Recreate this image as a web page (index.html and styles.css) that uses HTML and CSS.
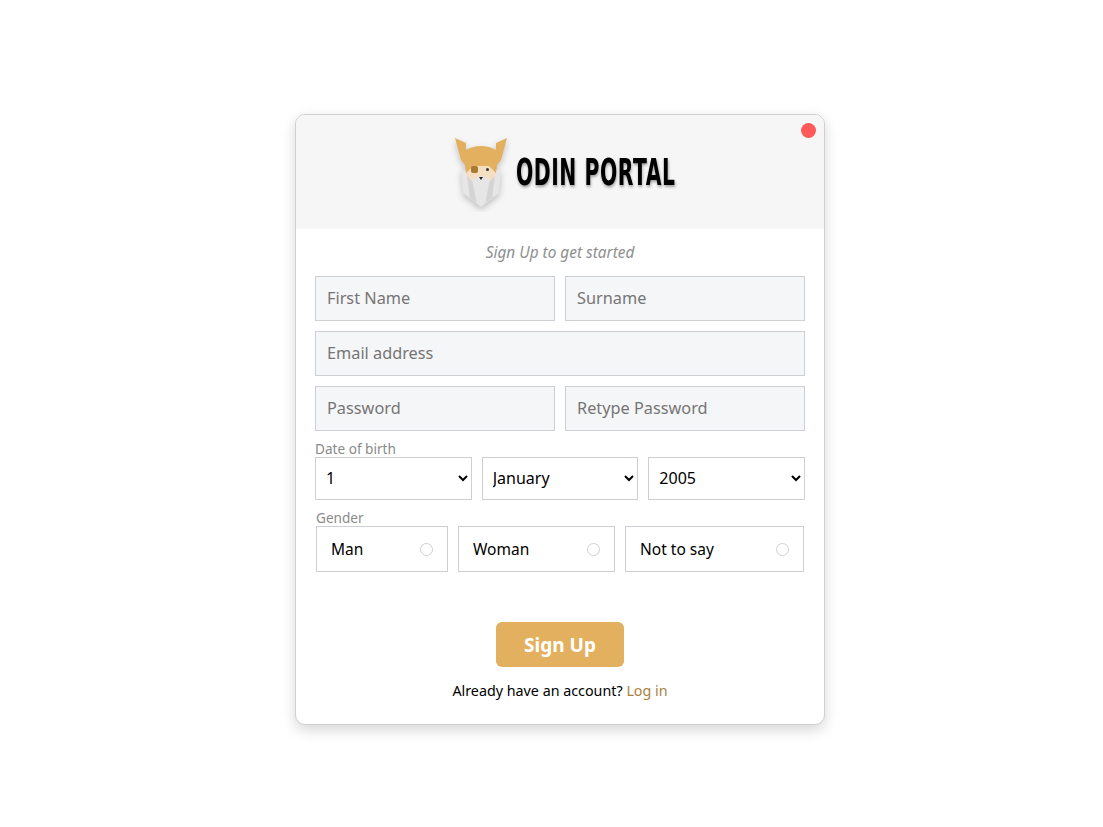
FILE: index.html
```html
<!DOCTYPE html>
<html lang="en">
  <head>
    <meta charset="UTF-8" />
    <meta name="viewport" content="width=device-width, initial-scale=1.0" />
    <title>Odin Portal - Sign Up</title>
    <link rel="stylesheet" href="styles.css">
  </head>
  <body>
    <div class="card">
      <span class="close-dot"></span>
      <header class="card-header">
        <svg class="logo" viewBox="450 132 60 80" width="60" height="80">
          <g class="logo-art">
            <polygon fill="#e6e6e6" points="460,170 500,170 498,193 480,207 462,193" />
            <polygon fill="#d4d4d4" points="466,176 472,180 476,203 469,198" />
            <polygon fill="#d4d4d4" points="494,176 488,180 484,203 491,198" />
            <polygon fill="#f5dfc3" points="465,164 495,164 495,175 488,182 472,182 465,175" />
            <polygon fill="#e6e6e6" points="471,179 480,176 489,179 484,204 476,204" />
            <path fill="#e2b05e" d="M454 138 L465 143 L465 150 Q472 146 480 146 Q488 146 495 150 L495 143 L506 138 L500 160 L496 165 L495 173 L488 166 L472 166 L465 173 L464 165 L460 160 Z" />
            <rect fill="#a97a2f" x="470" y="166" width="7" height="7" rx="2" />
            <circle fill="#333" cx="486.5" cy="169.5" r="1.5" />
            <polygon fill="#222" points="478,177 482,177 480,180" />
          </g>
        </svg>
        <span class="brand">ODIN PORTAL</span>
      </header>

      <form class="signup-form">
        <p class="tagline">Sign Up to get started</p>
        <div class="row">
          <input type="text" placeholder="First Name" />
          <input type="text" placeholder="Surname" />
        </div>
        <div class="row">
          <input type="email" placeholder="Email address" />
        </div>
        <div class="row">
          <input type="password" placeholder="Password" />
          <input type="password" placeholder="Retype Password" />
        </div>

        <label class="field-label dob-label">Date of birth</label>
        <div class="row">
          <select><option>1</option><option>2</option></select>
          <select><option>January</option><option>February</option></select>
          <select><option>2005</option><option>2004</option></select>
        </div>

        <label class="field-label gender-label">Gender</label>
        <div class="gender-row">
          <label class="gender gender-man">Man <input type="radio" name="gender" /></label>
          <label class="gender gender-woman">Woman <input type="radio" name="gender" /></label>
          <label class="gender gender-other">Not to say <input type="radio" name="gender" /></label>
        </div>

        <button type="submit" class="signup-btn">Sign Up</button>
        <p class="login-line">Already have an account? <a href="#">Log in</a></p>
      </form>
    </div>
  </body>
</html>
```

FILE: styles.css
```css
* {
  box-sizing: border-box;
}
html,
body {
  height: 100%;
}
body {
  margin: 0;
  padding: 114px 0 0 17px;
  display: flex;
  justify-content: center;
  align-items: flex-start;
  background-color: #fff;
  font-family: "Noto Sans", sans-serif;
}
.card {
  position: relative;
  width: 530px;
  height: 611px;
  border: 1px solid #d0d0d4;
  border-radius: 10px;
  background: #fff;
  box-shadow: 0 5px 14px rgba(0, 0, 0, 0.16);
  overflow: hidden;
}
.close-dot {
  position: absolute;
  top: 8px;
  right: 8px;
  width: 15px;
  height: 15px;
  border-radius: 50%;
  background: #ff5a5a;
}
.card-header {
  height: 114px;
  display: flex;
  align-items: flex-start;
  justify-content: center;
  gap: 5px;
  padding: 17px 0 0 6px;
  background: #f6f6f7;
}
.logo-art {
  filter: drop-shadow(0 3px 3px rgba(0, 0, 0, 0.22));
}
.brand {
  margin-top: 17px;
  width: 159px;
  font-family: "DejaVu Sans", sans-serif;
  font-weight: 700;
  font-size: 38px;
  line-height: 46px;
  letter-spacing: 1px;
  color: #000;
  white-space: nowrap;
  text-shadow: 1px 2px 4px rgba(0, 0, 0, 0.35);
  transform: scaleX(0.535);
  transform-origin: left center;
}
.signup-form {
  padding: 0 19px;
}
.tagline {
  margin: 15px 0 14px;
  font-size: 15.4px;
  line-height: 18px;
  font-style: italic;
  text-align: center;
  color: #8f8f8f;
}
.row {
  display: flex;
  gap: 10px;
  margin-bottom: 10px;
}
input[type="text"],
input[type="email"],
input[type="password"] {
  flex: 1;
  min-width: 0;
  height: 45px;
  padding: 0 11px 2px;
  border: 1px solid #ccd0d5;
  background: #f5f6f7;
  font-family: inherit;
  font-size: 16.3px;
}
input::placeholder {
  color: #757575;
}
.field-label {
  display: block;
  font-size: 13.6px;
  line-height: 16px;
  color: #8a8a8a;
}
.dob-label {
  margin-top: 10px;
}
select {
  flex: 1;
  min-width: 0;
  height: 43px;
  padding: 0 6px 2px;
  border: 1px solid #ccd0d5;
  background: #fff;
  color: #000;
  font-family: inherit;
  font-size: 16px;
}
.gender-label {
  margin: 0 0 0 1px;
}
.gender-row {
  display: flex;
  gap: 10px;
  padding: 0 1px;
}
.gender {
  display: flex;
  align-items: center;
  justify-content: space-between;
  height: 46px;
  padding: 0 14px 1px;
  border: 1px solid #ccd0d5;
  font-size: 15.5px;
}
.gender-man {
  width: 132px;
}
.gender-woman {
  width: 157px;
}
.gender-other {
  width: 179px;
}
.gender input {
  appearance: none;
  width: 13px;
  height: 13px;
  margin: 0 0 -1px;
  border: 1px solid #ccd0d5;
  border-radius: 50%;
  background: #fff;
}
.signup-btn {
  display: block;
  width: 128px;
  height: 45px;
  margin: 50px auto 0;
  border: 0;
  border-radius: 6px;
  background: #e2b05e;
  color: #fff;
  font-family: inherit;
  font-size: 19px;
  font-weight: 700;
}
.login-line {
  margin: 15px 0 0;
  font-size: 14.3px;
  line-height: 18px;
  text-align: center;
  color: #000;
}
.login-line a {
  color: #a9823f;
  text-decoration: none;
}
```
